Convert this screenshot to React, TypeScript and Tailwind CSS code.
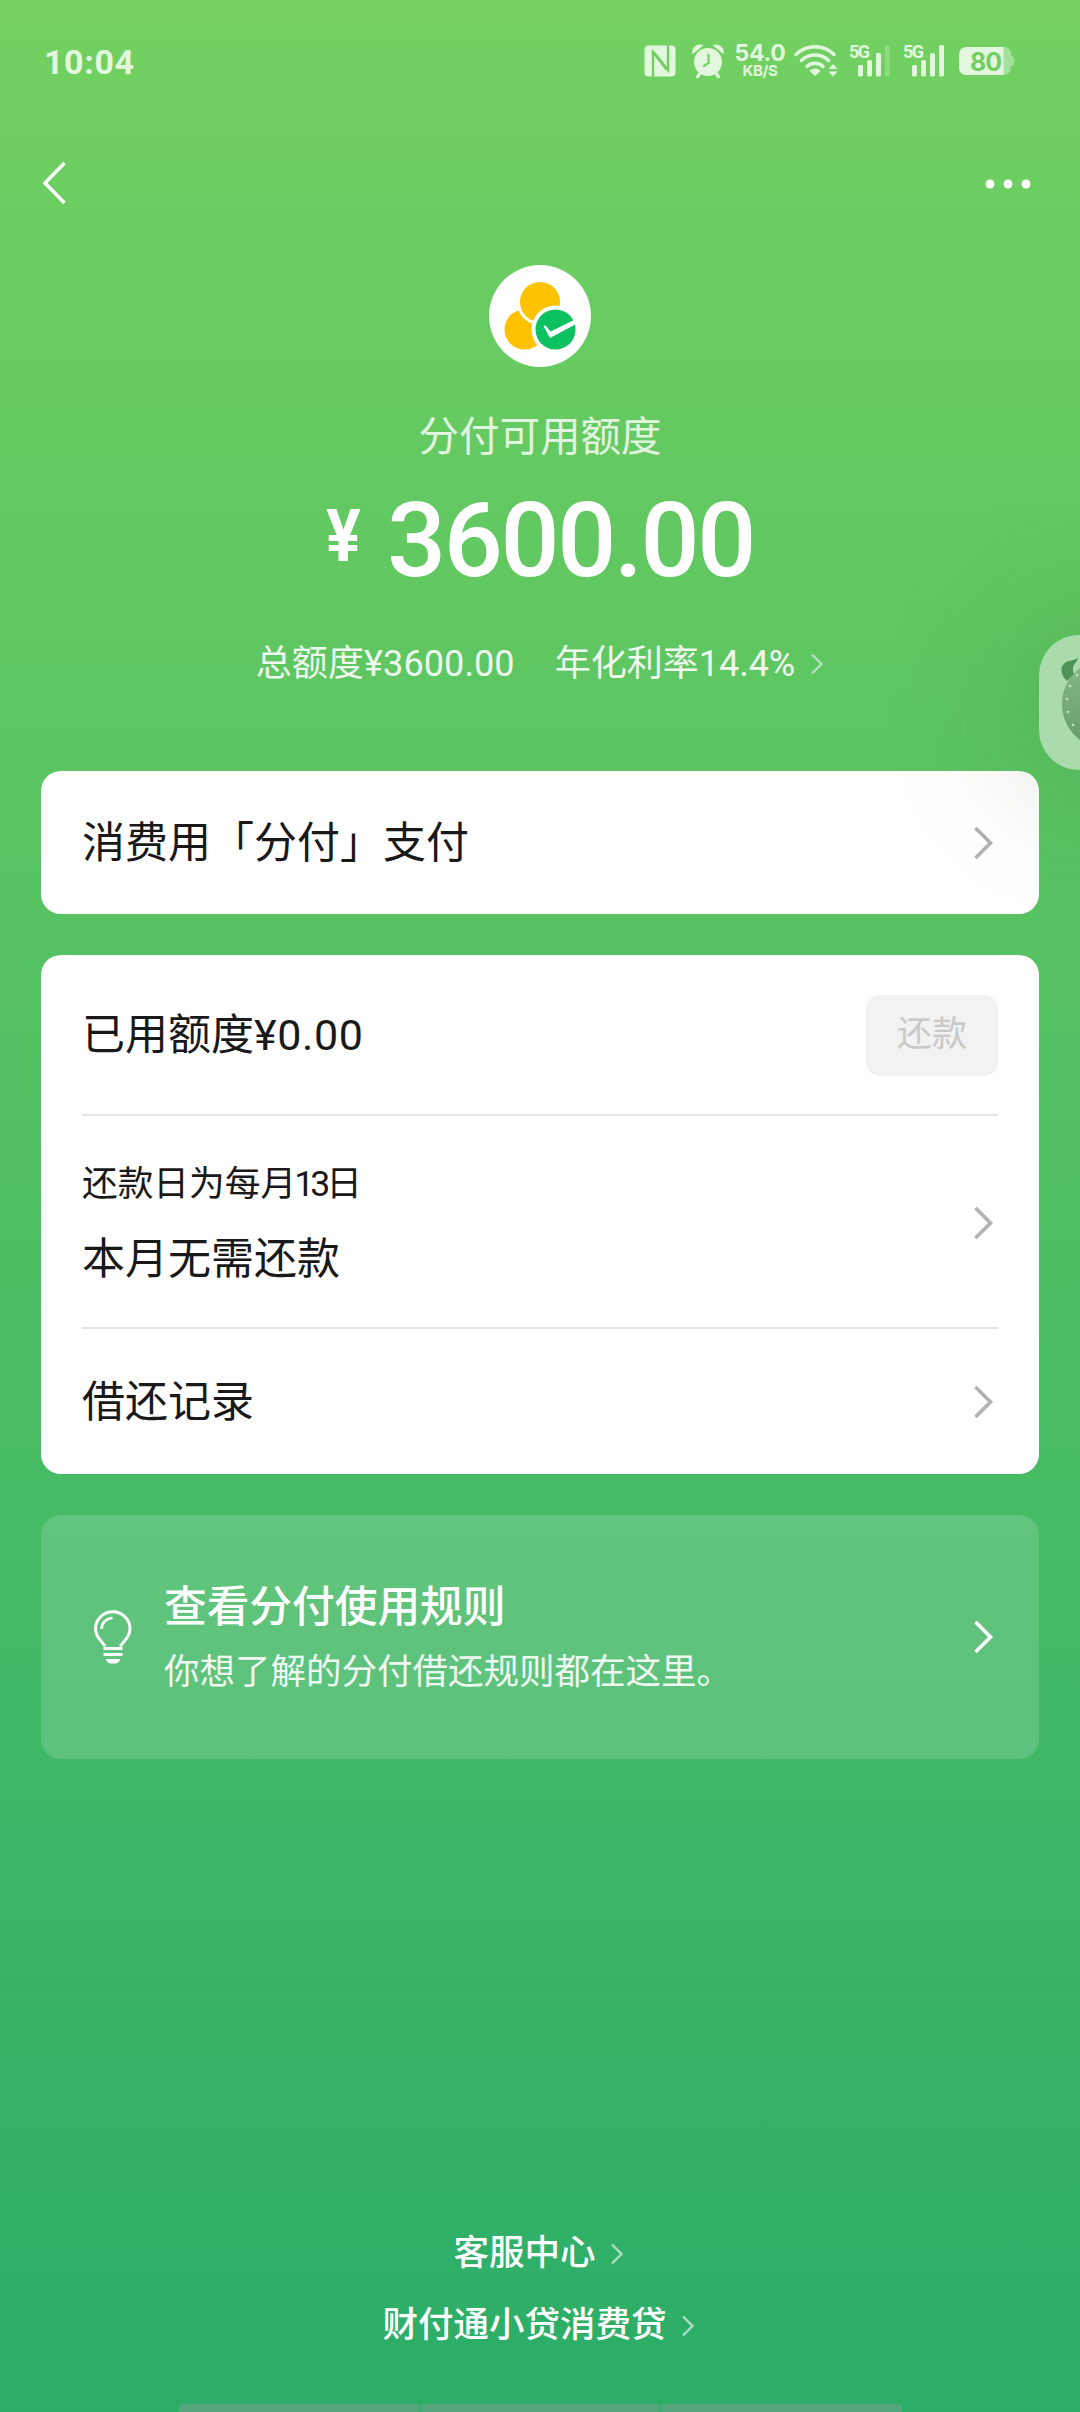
type ChevronProps = {
  className?: string;
  small?: boolean;
};

function Chevron({ className = '', small = false }: ChevronProps) {
  if (small) {
    return (
      <svg className={className} width="14" height="22" viewBox="0 0 14 22" fill="none">
        <path d="M2 1.5L11.5 11L2 20.5" stroke="currentColor" strokeWidth="2.4" />
      </svg>
    );
  }
  return (
    <svg className={className} width="20" height="34" viewBox="0 0 20 34" fill="none">
      <path d="M1.500 2L16.500 17L1.500 32" stroke="currentColor" strokeWidth="3.600" />
    </svg>
  );
}

// 信号格，最后一格可变淡
function Signal({ weak = false }: { weak?: boolean }) {
  return (
    <div className="relative h-[32px] w-[42px]">
      <span className="absolute left-0 top-[-1px] font-[Roboto,sans-serif] text-[18px] font-bold leading-[16px] tracking-[-1.5px]">5G</span>
      <svg className="absolute left-[9px] top-0" width="33" height="32" viewBox="0 0 33 32" fill="currentColor">
        <rect x="0" y="20" width="5" height="11.5" rx="1.5" />
        <rect x="9" y="15" width="5" height="16.5" rx="1.5" />
        <rect x="18" y="8" width="5" height="23.5" rx="1.5" />
        <rect x="27" y="0" width="5" height="31.5" rx="1.5" opacity={weak ? 0.25 : 1} />
      </svg>
    </div>
  );
}

function StatusBar() {
  return (
    <div className="flex h-[122px] items-center pl-[44px] pr-[65px] text-[#e3f7df]">
      <span className="pt-[2px] font-[Roboto,sans-serif] text-[34px] font-bold leading-none tracking-[0.6px]">10:04</span>
      <div className="ml-auto flex items-center">
        {/* NFC */}
        <svg width="32" height="32" viewBox="0 0 32 32">
          <rect x="0.5" y="0.5" width="31" height="31" rx="4" fill="currentColor" />
          <path d="M9 32V7L22.5 24.5" fill="none" stroke="#71cf61" strokeWidth="2.4" />
          <path d="M24 0V25L10.5 8" fill="none" stroke="#71cf61" strokeWidth="2.4" />
        </svg>
        {/* 闹钟 */}
        <svg className="ml-[16px]" width="32" height="34" viewBox="0 0 32 34">
          <path d="M1 9a7 7 0 0 1 9-7.5zM31 9a7 7 0 0 0-9-7.5z" fill="currentColor" stroke="currentColor" strokeWidth="1.5" strokeLinejoin="round" />
          <circle cx="16" cy="18" r="14" fill="currentColor" />
          <path d="M8 29l-2.500 4M24 29l2.500 4" stroke="currentColor" strokeWidth="3.200" strokeLinecap="round" />
          <path d="M16.500 10.500V19l-4.500 3" fill="none" stroke="#71cf61" strokeWidth="2.200" strokeLinecap="round" />
        </svg>
        <div className="ml-[10px] flex w-[52px] flex-col items-center font-[Inter,sans-serif] font-bold">
          <span className="text-[23px] leading-[19px] tracking-[-0.2px]">54.0</span>
          <span className="text-[15px] leading-[15px] tracking-[-0.4px]">KB/S</span>
        </div>
        {/* Wi-Fi */}
        <svg className="ml-[8px]" width="45" height="32" viewBox="0 0 45 32" fill="none" stroke="currentColor" strokeWidth="3.400" strokeLinecap="round">
          <path d="M2 9.500a27 27 0 0 1 38 0" />
          <path d="M7.500 15.500a19.500 19.500 0 0 1 27 0" />
          <path d="M13 21.500a11.500 11.500 0 0 1 16 0" />
          <path d="M16.500 26a7 7 0 0 1 9 0L21 30z" fill="currentColor" strokeWidth="1.500" strokeLinejoin="round" />
          <path d="M39 19l4.500 5h-9zM39 31.500l4.500-5h-9z" fill="currentColor" stroke="none" />
        </svg>
        <div className="ml-[10px]">
          <Signal weak />
        </div>
        <div className="ml-[12px]">
          <Signal />
        </div>
        <div className="relative ml-[14px] h-[28px] w-[56px]">
          <svg width="56" height="28" viewBox="0 0 56 28">
            <path d="M44 0h1a7 7 0 0 1 7 7v2c2 0 3.500 2 3.500 5s-1.500 5-3.500 5v2a7 7 0 0 1-7 7h-1z" fill="currentColor" opacity="0.450" />
            <path d="M7 0h37.500v28H7a7 7 0 0 1-7-7V7a7 7 0 0 1 7-7z" fill="currentColor" />
          </svg>
          <span className="absolute left-[11px] top-[1px] font-[Inter,sans-serif] text-[25px] font-bold leading-[28px] tracking-[-1px] text-[#71cf61]">80</span>
        </div>
      </div>
    </div>
  );
}

function NavBar() {
  return (
    <div className="flex h-[122px] items-center justify-between pl-[42px] pr-[49px] text-white">
      <svg width="26" height="44" viewBox="0 0 26 44" fill="none">
        <path d="M22.500 2L3 22L22.500 42" stroke="currentColor" strokeWidth="3.600" />
      </svg>
      <svg className="mt-[2px]" width="46" height="10" viewBox="0 0 46 10" fill="currentColor">
        <circle cx="5" cy="5" r="4.500" />
        <circle cx="23" cy="5" r="4.500" />
        <circle cx="41" cy="5" r="4.500" />
      </svg>
    </div>
  );
}

function Logo() {
  return (
    <svg width="102" height="102" viewBox="0 0 102 102">
      <circle cx="51" cy="51" r="51" fill="#fff" />
      <circle cx="35.500" cy="64.500" r="20" fill="#ffc200" />
      <circle cx="51" cy="37" r="23" fill="#fff" />
      <circle cx="51" cy="37" r="20" fill="#ffc200" />
      <circle cx="66.500" cy="64.500" r="24" fill="#fff" />
      <circle cx="66.500" cy="64.500" r="20" fill="#0bc160" />
      <path d="M54.500 61l2-.5 5 6L84 55.500l3 3.500L61 73z" fill="#fff" />
    </svg>
  );
}

function Bulb() {
  return (
    <svg width="40" height="54" viewBox="0 0 40 54" fill="none" stroke="#fff">
      <path d="M12 36.500C11 33 2.500 28 2.500 19a17 17 0 0 1 34.500 0c0 9-8.500 14-9.500 17.500" strokeWidth="3" />
      <path d="M8.500 19a11 11 0 0 1 11-11" strokeWidth="2.600" />
      <path d="M10.500 38.500h19M10.500 44.500h19" strokeWidth="3.200" />
      <path d="M12.500 49h15c-1.500 3-3 4.500-5 4.500h-5c-2 0-3.500-1.500-5-4.500z" fill="#fff" stroke="none" />
    </svg>
  );
}

// 屏幕右侧的悬浮侧边按钮
function FloatingDock() {
  return (
    <div className="absolute left-[1039px] top-[635px] h-[135px] w-[135px] rounded-[40px] bg-[#aadbad] shadow-[0_0_150px_10px_rgba(50,80,30,0.22)]">
      <svg width="135" height="135" viewBox="0 0 135 135">
        <defs>
          <linearGradient id="dock" x1="0" y1="0" x2="0" y2="1">
            <stop offset="0" stopColor="#87b98a" />
            <stop offset="1" stopColor="#659b69" />
          </linearGradient>
        </defs>
        <circle cx="68" cy="69" r="45" fill="url(#dock)" />
        <path d="M28 46C19 37 22 28 30 26c5-1 7-2 9-3-1 5-5 6-5 10 0 3 0 5 1 6z" fill="#4f9257" />
        <g fill="#c4e5c5">
          <circle cx="38" cy="40" r="1.300" />
          <circle cx="31" cy="51" r="1.300" />
          <circle cx="28" cy="64" r="1.300" />
          <circle cx="29" cy="77" r="1.300" />
          <circle cx="34" cy="90" r="1.300" />
        </g>
      </svg>
    </div>
  );
}

export default function App() {
  return (
    <div className="relative flex h-[2412px] w-[1080px] flex-col overflow-hidden bg-[linear-gradient(180deg,#74d162_0%,#6ccd61_8%,#5cc562_31%,#47bb65_62%,#2bad68_100%)] font-[Roboto,'Noto_Sans_CJK_SC',sans-serif]">
      <StatusBar />
      <NavBar />

      {/* 额度信息 */}
      <div className="flex h-[527px] flex-col items-center pt-[21px] text-white">
        <Logo />
        <p className="mt-[40px] text-[40.5px] leading-[60px] text-white/80">分付可用额度</p>
        <div className="mt-[15px] flex h-[114px] items-start font-medium">
          <span className="mr-[21px] mt-[19px] inline-block w-[40px] origin-left scale-x-90 text-[72px] font-bold leading-[72px]">¥</span>
          <span className="mt-[7px] text-[104px] leading-[104px] tracking-[-2.4px]">3600.00</span>
        </div>
        <div className="mt-[43px] flex h-[50px] items-center text-[36px] leading-[50px] text-white/90">
          <span className="tracking-[0.1px]">总额度¥3600.00</span>
          <span className="ml-[40px]">年化利率14.4%</span>
          <Chevron small className="ml-[15px] opacity-60" />
        </div>
      </div>

      <div className="flex flex-col gap-[41px] px-[41px] text-[#191919]">
        <div className="flex h-[143px] items-center justify-between rounded-[20px] bg-white pl-[41px] pr-[45px] text-[43px]">
          <span className="pt-[2px]">消费用「分付」支付</span>
          <Chevron className="text-[#b2b2b2]" />
        </div>

        <div className="flex h-[519px] flex-col rounded-[20px] bg-white px-[41px] text-[43px]">
          <div className="flex h-[161px] items-center justify-between border-b-2 border-[#e5e5e5]">
            <span className="pt-[2px]">
              已用额度<span className="tracking-[0.6px]">¥0.00</span>
            </span>
            <button className="mt-[2px] h-[81px] w-[132px] rounded-[14px] bg-[#f2f2f2] text-[35px] text-[#c9c9c9]">还款</button>
          </div>
          <div className="flex h-[213px] items-center justify-between border-b-2 border-[#e5e5e5] pr-[4px]">
            <div className="flex flex-col pt-[5px]">
              <span className="text-[35.7px] leading-[56px]">
                还款日为每月<span className="-ml-[2px] tracking-[-4px]">13</span>日
              </span>
              <span className="mt-[14px] leading-[66px]">本月无需还款</span>
            </div>
            <Chevron className="mt-[3px] text-[#b2b2b2]" />
          </div>
          <div className="flex flex-1 items-center justify-between pr-[4px]">
            <span className="pt-[2px]">借还记录</span>
            <Chevron className="text-[#b2b2b2]" />
          </div>
        </div>

        <div className="flex h-[244px] items-center rounded-[20px] bg-white/15 pl-[52px] pr-[45px] text-white">
          <Bulb />
          <div className="ml-[31px] flex flex-col pt-[4px]">
            <span className="text-[42.7px] font-medium leading-[66px]">查看分付使用规则</span>
            <span className="text-[35.5px] leading-[64px] text-white/90">你想了解的分付借还规则都在这里。</span>
          </div>
          <Chevron className="ml-auto" />
        </div>
      </div>

      {/* 底部链接 */}
      <div className="mt-auto flex flex-col items-center text-[35.5px] font-medium text-white">
        <a className="flex h-[72px] items-center pr-[3px]">
          客服中心
          <Chevron small className="ml-[14px] opacity-60" />
        </a>
        <a className="flex h-[72px] items-center pr-[3px]">
          财付通小贷消费贷
          <Chevron small className="ml-[14px] opacity-60" />
        </a>
        <div className="mt-[42px] flex h-[8px] w-[723px] gap-px">
          <div className="w-[241px] rounded-tl bg-[#55a67c]" />
          <div className="flex-1 bg-[#55a67c]" />
          <div className="w-[241px] rounded-tr bg-[#55a67c]" />
        </div>
      </div>

      <FloatingDock />
    </div>
  );
}
